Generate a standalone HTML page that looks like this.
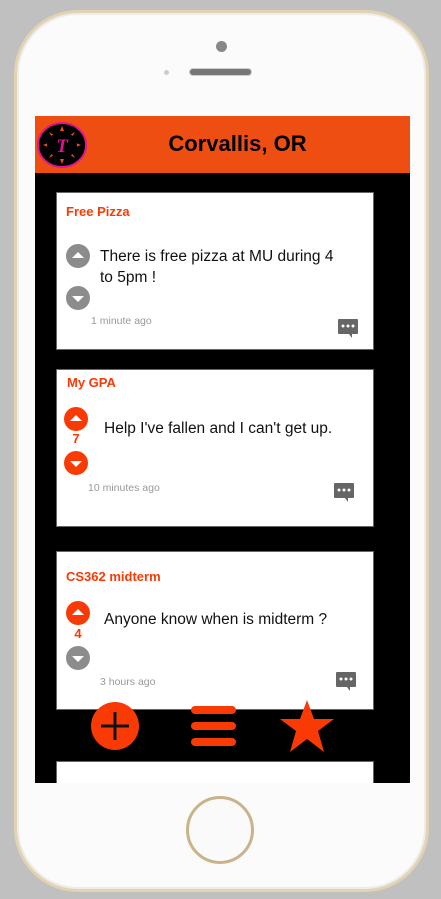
<!DOCTYPE html>
<html><head><meta charset="utf-8"><style>
*{margin:0;padding:0;box-sizing:border-box}
body{width:441px;height:899px;background:#c0c0c0;position:relative;overflow:hidden;font-family:"Liberation Sans",sans-serif}
.phone{position:absolute;left:14px;top:10px;width:415px;height:882px;border-radius:64px;background:#e4d3b0;}
.inner{position:absolute;left:3px;top:3px;right:3px;bottom:3px;border-radius:61px;background:#fbfbfb;border:2px solid #ececec}
.abs{position:absolute}
.screen{position:absolute;left:35px;top:116px;width:375px;height:667px;background:#000;overflow:hidden}
.hdr{position:absolute;left:0;top:0;width:375px;height:57px;background:#ef4e12}
.hdr h1{position:absolute;left:0;right:0;top:15px;text-align:center;font-size:22px;font-weight:bold;color:#000;padding-left:30px}
.card{position:absolute;left:21px;width:318px;background:#fff;border:1px solid #666}
.title{position:absolute;color:#fa3a05;font-weight:bold;font-size:13px}
.txt{position:absolute;font-size:15.5px;color:#111;line-height:21px}
.time{position:absolute;font-size:10.5px;color:#999}
.vb{position:absolute;width:24px;height:24px;border-radius:50%}
.up::after,.dn::after{content:"";position:absolute;left:6px;border-left:6px solid transparent;border-right:6px solid transparent}
.up::after{top:8px;border-bottom:6px solid #fff}
.dn::after{top:10px;border-top:6px solid #fff}
.g{background:#8c8c8c}.o{background:#fa3a05}
.cnt{position:absolute;color:#fa3a05;font-weight:bold;font-size:13px;width:24px;text-align:center}
</style></head><body>
<div class="phone"><div class="inner"></div></div>
<div class="abs" style="left:216px;top:41px;width:11px;height:11px;border-radius:50%;background:#888"></div>
<div class="abs" style="left:164px;top:70px;width:5px;height:5px;border-radius:50%;background:#ccc"></div>
<div class="abs" style="left:189px;top:68px;width:63px;height:8px;border-radius:4px;background:#777;border:1px solid #ccc"></div>
<div class="abs" style="left:186px;top:796px;width:68px;height:68px;border-radius:50%;border:3px solid #c9b38a;background:#fafafa"></div>
<div class="screen">
 <div class="hdr">
  <svg class="abs" style="left:2px;top:5px" width="50" height="48" viewBox="0 0 50 48"><ellipse cx="25" cy="24" rx="24" ry="22" fill="#000" stroke="#e0148c" stroke-width="2"/><g fill="#ef4e12"><path d="M25 5l2 5h-4zM25 43l2-5h-4zM6 24l5 2v-4zM44 24l-5 2v-4zM12 11l5 3-2 2zM38 11l-5 3 2 2zM12 37l5-3-2-2zM38 37l-5-3 2-2z"/></g><ellipse cx="25" cy="24" rx="15" ry="13" fill="#000"/><text x="25" y="31" text-anchor="middle" font-size="19" font-style="italic" font-weight="bold" fill="#e0148c" font-family="Liberation Serif,serif">T</text></svg>
  <h1>Corvallis, OR</h1>
 </div>
 <div class="card" style="top:76px;height:158px">
  <div class="title" style="left:9px;top:11px">Free Pizza</div>
  <div class="vb g up" style="left:9px;top:51px"></div>
  <div class="vb g dn" style="left:9px;top:93px"></div>
  <div class="txt" style="left:43px;top:53px;width:245px">There is free pizza at MU during 4 to 5pm !</div>
  <div class="time" style="left:34px;top:122px">1 minute ago</div>
  <svg class="abs" style="left:280px;top:124px" width="22" height="22" viewBox="0 0 22 22"><path d="M2 2h18a1 1 0 0 1 1 1v13a1 1 0 0 1-1 1h-5v4l-3-4H2a1 1 0 0 1-1-1V3a1 1 0 0 1 1-1z" fill="#666"/><circle cx="6" cy="9" r="1.5" fill="#fff"/><circle cx="11" cy="9" r="1.5" fill="#fff"/><circle cx="16" cy="9" r="1.5" fill="#fff"/></svg>
 </div>
 <div class="card" style="top:253px;height:158px">
  <div class="title" style="left:10px;top:5px">My GPA</div>
  <div class="vb o up" style="left:7px;top:37px"></div>
  <div class="cnt" style="left:7px;top:61px">7</div>
  <div class="vb o dn" style="left:7px;top:81px"></div>
  <div class="txt" style="left:47px;top:48px;width:260px">Help I've fallen and I can't get up.</div>
  <div class="time" style="left:31px;top:112px">10 minutes ago</div>
  <svg class="abs" style="left:276px;top:111px" width="22" height="22" viewBox="0 0 22 22"><path d="M2 2h18a1 1 0 0 1 1 1v13a1 1 0 0 1-1 1h-5v4l-3-4H2a1 1 0 0 1-1-1V3a1 1 0 0 1 1-1z" fill="#666"/><circle cx="6" cy="9" r="1.5" fill="#fff"/><circle cx="11" cy="9" r="1.5" fill="#fff"/><circle cx="16" cy="9" r="1.5" fill="#fff"/></svg>
 </div>
 <div class="card" style="top:435px;height:159px">
  <div class="title" style="left:9px;top:17px">CS362 midterm</div>
  <div class="vb o up" style="left:9px;top:49px"></div>
  <div class="cnt" style="left:9px;top:74px">4</div>
  <div class="vb g dn" style="left:9px;top:94px"></div>
  <div class="txt" style="left:47px;top:57px;width:260px">Anyone know when is midterm ?</div>
  <div class="time" style="left:43px;top:124px">3 hours ago</div>
  <svg class="abs" style="left:278px;top:118px" width="22" height="22" viewBox="0 0 22 22"><path d="M2 2h18a1 1 0 0 1 1 1v13a1 1 0 0 1-1 1h-5v4l-3-4H2a1 1 0 0 1-1-1V3a1 1 0 0 1 1-1z" fill="#666"/><circle cx="6" cy="9" r="1.5" fill="#fff"/><circle cx="11" cy="9" r="1.5" fill="#fff"/><circle cx="16" cy="9" r="1.5" fill="#fff"/></svg>
 </div>
 <div class="card" style="top:645px;height:40px"></div>
 <svg class="abs" style="left:56px;top:585px" width="50" height="50" viewBox="0 0 50 50"><circle cx="24" cy="25" r="24" fill="#fa3a05"/><path d="M24 11v28M10 25h28" stroke="#111" stroke-width="3"/></svg>
 <svg class="abs" style="left:155px;top:588px" width="50" height="46" viewBox="0 0 50 46"><path d="M5 6h37M5 22h37M5 38h37" stroke="#fa3a05" stroke-width="8" stroke-linecap="round"/></svg>
 <svg class="abs" style="left:243px;top:583px" width="58" height="54" viewBox="0 0 58 54"><path d="M29 1l7 19h20l-16 12 6 21-17-13-17 13 6-21L2 20h20z" fill="#fa3a05"/></svg>
</div>
</body></html>
